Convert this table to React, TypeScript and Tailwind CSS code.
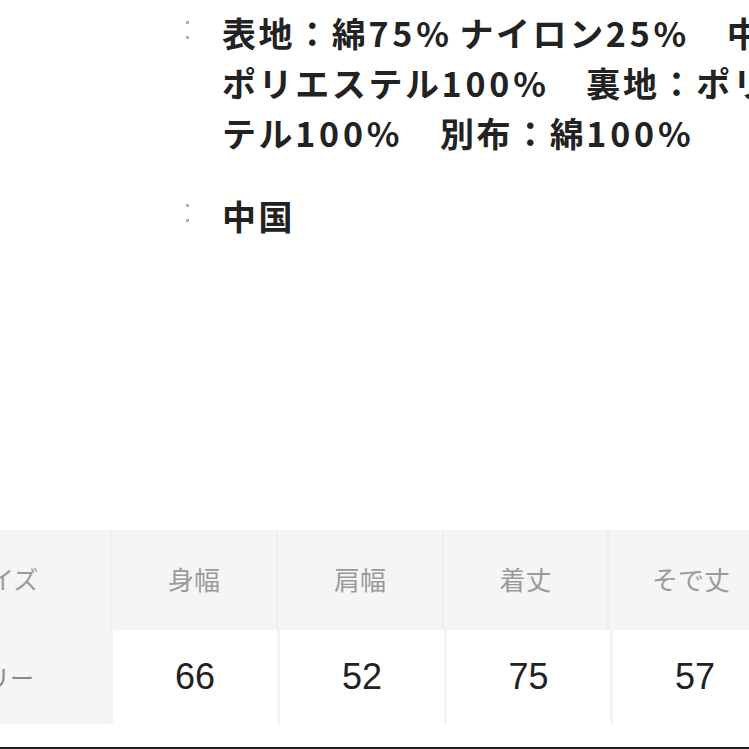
const jp = { fontFamily: '"Noto Sans CJK JP", "Noto Sans", sans-serif' };
const num = { fontFamily: '"Liberation Sans", Arial, sans-serif' };

const materialLines = [
  '表地：綿75% ナイロン25%　中綿：',
  'ポリエステル100%　裏地：ポリエス',
  'テル100%　別布：綿100%',
];

const headers = ['身幅', '肩幅', '着丈', 'そで丈'];
const values = ['66', '52', '75', '57'];

// digits in the source font run a bit wider than Noto's
function Spaced({ text }: { text: string }) {
  const parts = text.split(/([0-9%]+| )/);
  return (
    <>
      {parts.map((p, i) => {
        if (p === ' ') return <span key={i} className="tracking-[-1px]"> </span>;
        if (/[0-9%]/.test(p)) return <span key={i} className="tracking-[3.8px]">{p}</span>;
        return <span key={i}>{p}</span>;
      })}
    </>
  );
}

function Colon() {
  return (
    <div className="w-[42px] shrink-0 flex flex-col items-start pl-[6px] pt-[13px] gap-[12px]">
      <span className="block w-[3px] h-[3px] bg-[#b0b0b0]" />
      <span className="block w-[3px] h-[3px] bg-[#b0b0b0]" />
    </div>
  );
}

export default function App() {
  return (
    <div className="w-[749px] h-[749px] overflow-hidden bg-white flex flex-col" style={jp}>
      {/* spec text */}
      <div className="pl-[180px] pt-[8px] text-[#222] text-[34px] font-bold leading-[50px] tracking-[2.6px]">
        <div className="flex">
          <Colon />
          <div className="whitespace-nowrap">
            {materialLines.map((l, i) => (
              <div key={i}>
                <Spaced text={l} />
              </div>
            ))}
          </div>
        </div>
        <div className="flex mt-[33px]">
          <Colon />
          <div className="whitespace-nowrap">中国</div>
        </div>
      </div>

      <div className="flex-1" />

      {/* size table */}
      <div className="w-[790px]">
        <div className="grid grid-cols-[110px_164px_164px_163px_170px] gap-x-[2px] bg-[#eeeeee]">
          <div className="h-[100px] pb-[3px] bg-[#f5f5f5] flex items-center text-[25px] text-[#9a9a9a] whitespace-nowrap">
            <span className="ml-[-36px]">サイズ</span>
          </div>
          {headers.map((h) => (
            <div key={h} className="h-[100px] pb-[3px] bg-[#f5f5f5] flex items-center text-[26px] text-[#9a9a9a]">
              <span className="w-[164px] text-center">{h}</span>
            </div>
          ))}
        </div>
        <div className="grid grid-cols-[110px_164px_164px_163px_170px] gap-x-[3px] bg-[#f3f3f3]">
          <div className="h-[94px] bg-[#f5f5f5] flex items-center text-[24px] text-[#8a8a8a] whitespace-nowrap">
            <span className="ml-[-38px]">フリー</span>
          </div>
          {values.map((v) => (
            <div key={v} className="h-[94px] bg-white flex items-center text-[36px] text-[#222]" style={num}>
              <span className="w-[164px] text-center">{v}</span>
            </div>
          ))}
        </div>
      </div>
      <div className="h-[23px] bg-white" />
      <div className="h-[2px] bg-[#1e1e1e]" />
    </div>
  );
}
